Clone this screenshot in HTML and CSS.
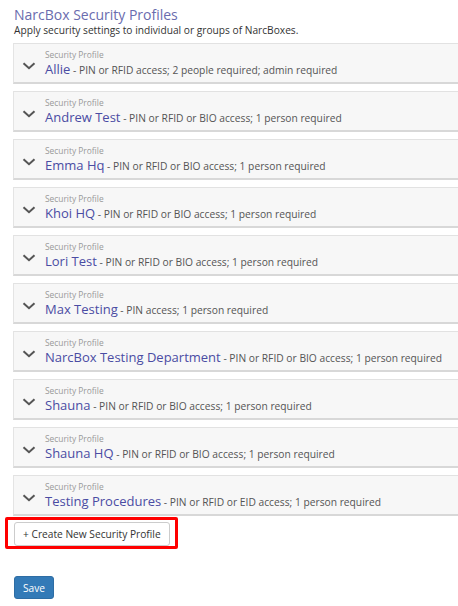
FILE: index.html
```html
<!DOCTYPE html>
<html>
<head>
<meta charset="utf-8">
<link rel="stylesheet" href="styles.css">
</head>
<body>
<div class="page">
  <h1 class="title">NarcBox Security Profiles</h1>
  <p class="subtitle">Apply security settings to individual or groups of NarcBoxes.</p>
  <div class="profiles">
    <div class="card"><svg class="chev" width="14" height="8" viewBox="0 0 14 8"><polyline points="1.5,1.2 7,6.2 12.5,1.2"/></svg><div class="info"><div class="label">Security Profile</div><div class="line"><span class="name">Allie</span><span class="desc"> - PIN or RFID access; 2 people required; admin required</span></div></div></div>
    <div class="card"><svg class="chev" width="14" height="8" viewBox="0 0 14 8"><polyline points="1.5,1.2 7,6.2 12.5,1.2"/></svg><div class="info"><div class="label">Security Profile</div><div class="line"><span class="name">Andrew Test</span><span class="desc"> - PIN or RFID or BIO access; 1 person required</span></div></div></div>
    <div class="card"><svg class="chev" width="14" height="8" viewBox="0 0 14 8"><polyline points="1.5,1.2 7,6.2 12.5,1.2"/></svg><div class="info"><div class="label">Security Profile</div><div class="line"><span class="name">Emma Hq</span><span class="desc"> - PIN or RFID or BIO access; 1 person required</span></div></div></div>
    <div class="card"><svg class="chev" width="14" height="8" viewBox="0 0 14 8"><polyline points="1.5,1.2 7,6.2 12.5,1.2"/></svg><div class="info"><div class="label">Security Profile</div><div class="line"><span class="name">Khoi HQ</span><span class="desc"> - PIN or RFID or BIO access; 1 person required</span></div></div></div>
    <div class="card"><svg class="chev" width="14" height="8" viewBox="0 0 14 8"><polyline points="1.5,1.2 7,6.2 12.5,1.2"/></svg><div class="info"><div class="label">Security Profile</div><div class="line"><span class="name">Lori Test</span><span class="desc"> - PIN or RFID or BIO access; 1 person required</span></div></div></div>
    <div class="card"><svg class="chev" width="14" height="8" viewBox="0 0 14 8"><polyline points="1.5,1.2 7,6.2 12.5,1.2"/></svg><div class="info"><div class="label">Security Profile</div><div class="line"><span class="name">Max Testing</span><span class="desc"> - PIN access; 1 person required</span></div></div></div>
    <div class="card"><svg class="chev" width="14" height="8" viewBox="0 0 14 8"><polyline points="1.5,1.2 7,6.2 12.5,1.2"/></svg><div class="info"><div class="label">Security Profile</div><div class="line"><span class="name">NarcBox Testing Department</span><span class="desc"> - PIN or RFID or BIO access; 1 person required</span></div></div></div>
    <div class="card"><svg class="chev" width="14" height="8" viewBox="0 0 14 8"><polyline points="1.5,1.2 7,6.2 12.5,1.2"/></svg><div class="info"><div class="label">Security Profile</div><div class="line"><span class="name">Shauna</span><span class="desc"> - PIN or RFID or BIO access; 1 person required</span></div></div></div>
    <div class="card"><svg class="chev" width="14" height="8" viewBox="0 0 14 8"><polyline points="1.5,1.2 7,6.2 12.5,1.2"/></svg><div class="info"><div class="label">Security Profile</div><div class="line"><span class="name">Shauna HQ</span><span class="desc"> - PIN or RFID or BIO access; 1 person required</span></div></div></div>
    <div class="card"><svg class="chev" width="14" height="8" viewBox="0 0 14 8"><polyline points="1.5,1.2 7,6.2 12.5,1.2"/></svg><div class="info"><div class="label">Security Profile</div><div class="line"><span class="name">Testing Procedures</span><span class="desc"> - PIN or RFID or EID access; 1 person required</span></div></div></div>
  </div>
  <div class="create-wrap">
    <button class="btn-create">+ Create New Security Profile</button>
    <span class="highlight"></span>
  </div>
  <button class="btn-save">Save</button>
</div>
</body>
</html>
```
FILE: styles.css
```css
html, body {
  margin: 0;
  padding: 0;
  background: #fff;
  overflow: hidden;
}
body {
  font-family: "Open Sans", "Liberation Sans", sans-serif;
  color: #333;
}
.page {
  padding: 5px 0 0 13px;
}
.title {
  margin: 0 0 0 1px;
  font-size: 14px;
  font-weight: 400;
  line-height: 19px;
  color: #6a6cae;
}
.subtitle {
  margin: 0 0 0 1px;
  font-size: 10.2px;
  line-height: 13px;
  color: #333;
}
.profiles {
  margin-top: 6px;
  display: flex;
  flex-direction: column;
  gap: 7px;
}
.card {
  display: flex;
  align-items: flex-start;
  height: 38px;
  margin-right: -20px;
  background: #f7f7f7;
  border-top: 1px solid #e2e2e2;
  border-left: 1px solid #e4e4e4;
  border-bottom: 2px solid #d8d8d8;
}
.chev {
  flex: none;
  margin: 18px 0 0 8px;
  fill: none;
  stroke: #555;
  stroke-width: 2;
}
.info {
  margin-left: 9px;
  padding-top: 5px;
}
.label {
  font-size: 8.4px;
  line-height: 11px;
  color: #999;
}
.line {
  line-height: 17px;
  white-space: nowrap;
}
.name {
  font-size: 13px;
  color: #4a4ca3;
}
.desc {
  font-size: 10.25px;
  color: #555;
}
.create-wrap {
  position: relative;
  width: max-content;
  margin: 6px 0 0 1px;
}
.btn-create {
  display: block;
  height: 24px;
  padding: 0 8px;
  font-family: inherit;
  font-size: 10.2px;
  color: #333;
  background: #fff;
  border: 1px solid #ccc;
  border-radius: 3px;
}
.highlight {
  position: absolute;
  left: -9px;
  top: -5px;
  right: -8px;
  bottom: -3px;
  border: 3px solid #f00;
  border-radius: 2px;
  pointer-events: none;
}
.btn-save {
  display: block;
  margin: 30px 0 0 1px;
  width: 40px;
  height: 23px;
  padding: 0;
  font-family: inherit;
  font-size: 10.2px;
  color: #fff;
  background: #337ab7;
  border: 1px solid #2e6da4;
  border-radius: 3px;
}
```
